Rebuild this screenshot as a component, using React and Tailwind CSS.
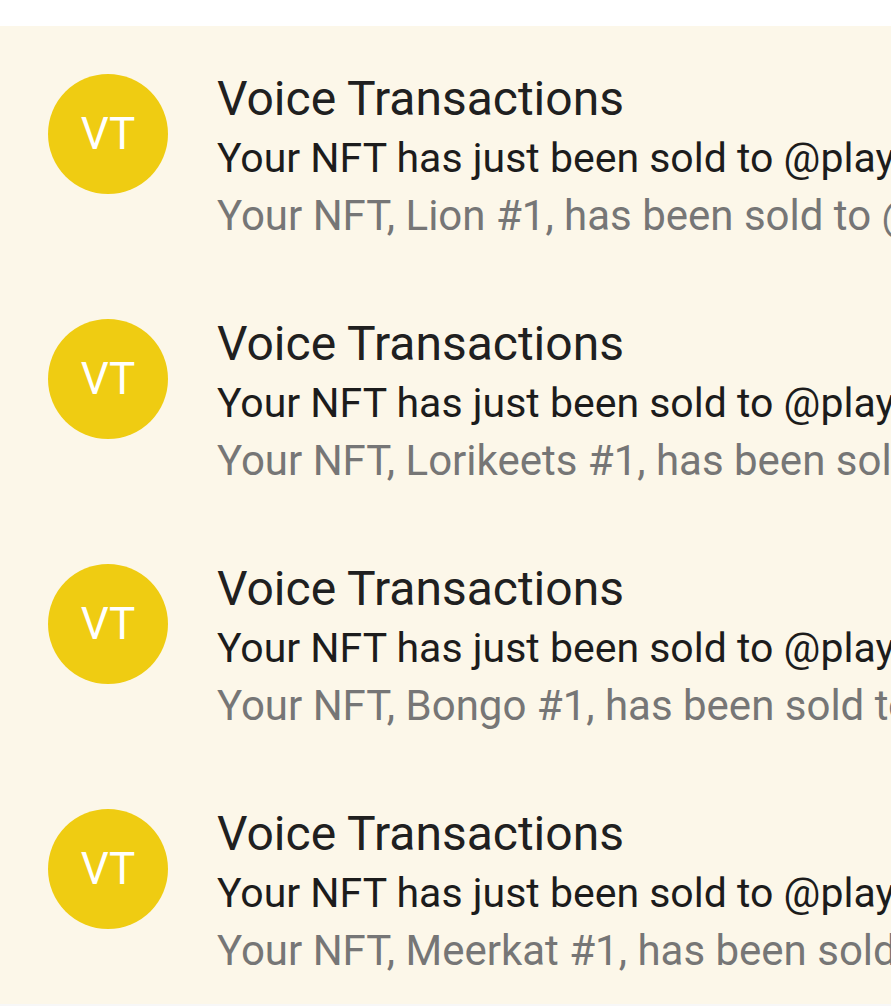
import React from "react";

const items = ["Lion", "Lorikeets", "Bongo", "Meerkat"];

export default function App() {
  return (
    <div className="w-[891px] h-[1006px] bg-white overflow-hidden" style={{ fontFamily: "Roboto, 'Noto Sans', sans-serif" }}>
      <div className="h-[26px] bg-white" />
      <div className="bg-[#fcf7e9] h-[978px] flex flex-col">
        {items.map((name) => (
          <div key={name} className="h-[245px] flex shrink-0">
            <div className="pl-[48px] pt-[48px] shrink-0">
              <div className="w-[120px] h-[120px] rounded-full bg-[#efcc12] flex items-center justify-center text-white text-[44px] leading-none">
                VT
              </div>
            </div>
            <div className="pl-[49px] pt-[42px] min-w-0 flex-1 overflow-hidden whitespace-nowrap">
              <div className="text-[48px] leading-[61px] text-[#202020]">Voice Transactions</div>
              <div className="text-[41px] leading-[58px] text-[#1c1c1c]">Your NFT has just been sold to @playerone</div>
              <div className="text-[42px] leading-[58px] text-[#767676]">Your NFT, {name} #1, has been sold to @playerone</div>
            </div>
          </div>
        ))}
      </div>
      <div className="h-[2px] bg-[#f7f7f7]" />
    </div>
  );
}
